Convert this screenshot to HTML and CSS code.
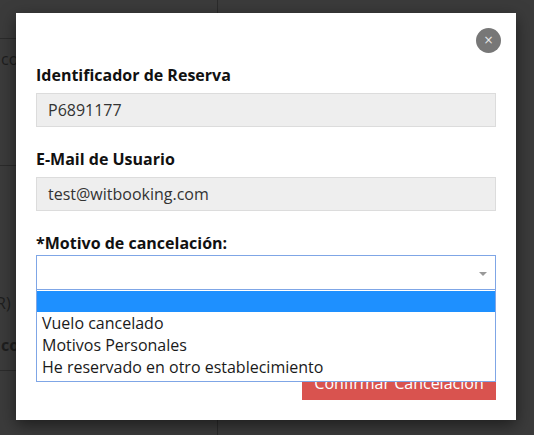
FILE: index.html
```html
<!DOCTYPE html>
<html lang="es">
<head>
<meta charset="utf-8">
<title>Cancelar reserva</title>
<link rel="stylesheet" href="styles.css">
</head>
<body>
<div class="page">
  <div class="side">
    <div class="row r1"></div>
    <div class="row r2"><span class="ghost">co</span></div>
    <div class="row r3"><span class="ghost paren">R)</span><b class="ghost bold">co</b></div>
  </div>
  <div class="main"></div>
</div>

<div class="modal">
  <div class="head"><button class="close" type="button">&times;</button></div>

  <div class="field first">
    <label class="lbl">Identificador de Reserva</label>
    <div class="input">P6891177</div>
  </div>

  <div class="field">
    <label class="lbl">E-Mail de Usuario</label>
    <div class="input">test@witbooking.com</div>
  </div>

  <div class="field">
    <label class="lbl lbl-select">*Motivo de cancelación:</label>
    <div class="select-wrap">
      <div class="select"><span class="arrow"></span></div>
      <ul class="dropdown">
        <li class="opt active"></li>
        <li class="opt">Vuelo cancelado</li>
        <li class="opt">Motivos Personales</li>
        <li class="opt">He reservado en otro establecimiento</li>
      </ul>
    </div>
  </div>

  <div class="actions">
    <button class="btn-danger" type="button">Confirmar Cancelación</button>
  </div>
</div>
</body>
</html>
```

FILE: styles.css
```css
html, body {
  margin: 0;
  padding: 0;
}
body {
  width: 534px;
  height: 435px;
  overflow: hidden;
  background: #3b3b3b;
  font-family: "Open Sans", "Noto Sans", sans-serif;
  font-size: 16px;
  line-height: 22px;
  position: relative;
}

/* ghost page behind overlay */
.page {
  display: flex;
  height: 435px;
}
.side {
  width: 217px;
  border-right: 1px solid #2b2b2b;
}
.main {
  flex: 1;
}
.row {
  border-bottom: 1px solid #2b2b2b;
}
.r1 { height: 38px; }
.r2 {
  height: 127px;
  box-sizing: border-box;
  padding-top: 9px;
  padding-left: 1px;
}
.r3 {
  height: 205px;
  box-sizing: border-box;
  padding-top: 126px;
}
.ghost {
  color: #1e1e1e;
  display: block;
}
.paren { margin-left: -4px; }
.bold {
  margin-top: 20px;
  padding-left: 1px;
  font-weight: 700;
}

/* modal */
.modal {
  position: absolute;
  left: 16px;
  top: 13px;
  width: 500px;
  box-sizing: border-box;
  padding: 15px 20px 20px;
  background: #fff;
  box-shadow: 0 5px 15px rgba(0, 0, 0, 0.5);
}
.head {
  display: flex;
  justify-content: flex-end;
  margin-right: -5px;
}
.close {
  width: 25px;
  height: 25px;
  border-radius: 50%;
  border: none;
  padding: 0;
  background: #777;
  color: #e8e8e8;
  font-family: "DejaVu Sans", sans-serif;
  font-size: 12px;
  line-height: 25px;
  text-align: center;
}
.field { margin-top: 21px; }
.field.first { margin-top: 11px; }
.lbl {
  display: block;
  font-weight: 700;
  color: #111;
  margin-bottom: 7px;
}
.lbl-select { margin-bottom: 1px; }
.input {
  height: 34px;
  box-sizing: border-box;
  border: 1px solid #dcdcdc;
  background: #eee;
  padding: 0 11px;
  line-height: 32px;
  color: #333;
}
.select-wrap { position: relative; }
.select {
  height: 35px;
  box-sizing: border-box;
  border: 1px solid #7fa6e6;
  background: #fff;
  position: relative;
}
.arrow {
  position: absolute;
  right: 8px;
  top: 16px;
  width: 0;
  height: 0;
  border-top: 4px solid #999;
  border-left: 4px solid transparent;
  border-right: 4px solid transparent;
}
.dropdown {
  position: absolute;
  left: 0;
  right: 0;
  top: 100%;
  margin: 0;
  padding: 0 0 3px;
  list-style: none;
  background: #fff;
  border: 1px solid #7fa6e6;
  border-top: none;
  z-index: 2;
}
.opt {
  height: 22px;
  padding: 0 5px;
  color: #1a1a1a;
  white-space: nowrap;
}
.opt.active {
  height: 21px;
  margin-top: 1px;
  background: #1e90ff;
}
.actions {
  display: flex;
  justify-content: flex-end;
  margin-top: 76px;
}
.btn-danger {
  width: 194px;
  height: 34px;
  border: none;
  background: #d9534f;
  color: #fff;
  font-family: "Open Sans", "Noto Sans", sans-serif;
  font-size: 16px;
  line-height: 22px;
  padding: 0 12px;
}
```
